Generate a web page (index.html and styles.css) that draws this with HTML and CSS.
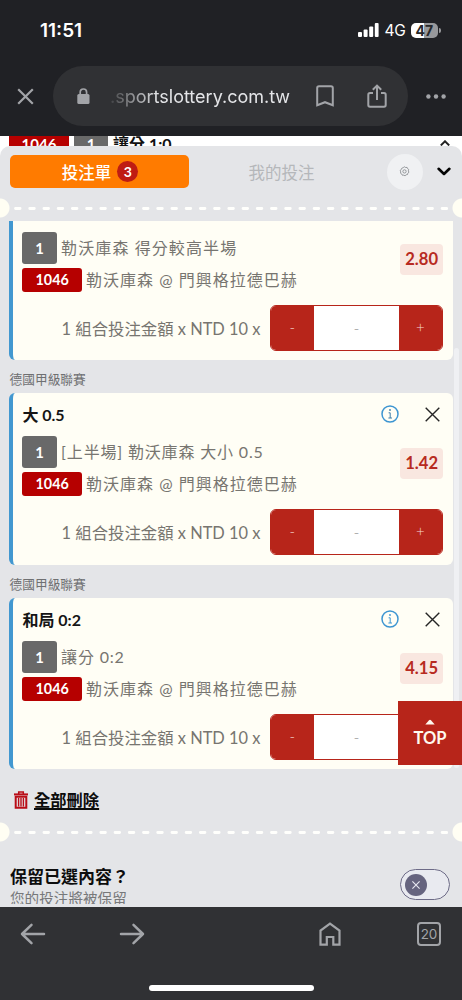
FILE: index.html
```html
<!DOCTYPE html>
<html lang="zh-Hant">
<head>
<meta charset="utf-8">
<meta name="viewport" content="width=device-width, initial-scale=1">
<title>投注單</title>
<link rel="stylesheet" href="styles.css">
</head>
<body>
<div class="phone">
  <header class="chrome">
    <div class="status">
      <span class="clock">11:51</span>
      <div class="status-right">
        <svg class="signal" width="21" height="14" viewBox="0 0 21 14" fill="#fff"><rect x="0" y="9" width="4" height="5" rx="1"/><rect x="5.6" y="6.5" width="4" height="7.5" rx="1"/><rect x="11.2" y="3.5" width="4" height="10.5" rx="1"/><rect x="16.8" y="0" width="3.8" height="14" rx="1"/></svg>
        <span class="network">4G</span>
        <span class="battery">47</span><span class="battery-tip"></span>
      </div>
    </div>
    <div class="address">
      <svg class="close-tab" width="17" height="17" viewBox="0 0 17 17" fill="none" stroke="#a2a4a8" stroke-width="2.2"><path d="M1.2 1.2 15.8 15.8M15.8 1.2 1.2 15.8"/></svg>
      <div class="omnibox">
        <svg class="lock" width="13" height="16" viewBox="0 0 13 16"><rect x="0.3" y="6" width="12.2" height="10" rx="1.5" fill="#a2a4a8"/><path d="M3.2 7V4.2a3.2 3.2 0 0 1 6.4 0V7" fill="none" stroke="#a2a4a8" stroke-width="1.7"/></svg>
        <span class="domain">.sportslottery.com.tw</span>
        <svg class="bookmark" width="18" height="22" viewBox="0 0 18 22" fill="none" stroke="#a2a4a8" stroke-width="2"><path d="M1.2 20.3V3Q1.2 1.2 3 1.2H15Q16.8 1.2 16.8 3V20.3L9 17.2Z"/></svg>
        <svg class="share" width="20" height="24" viewBox="0 0 20 24" fill="none" stroke="#a2a4a8" stroke-width="2"><path d="M6 9H3Q1.3 9 1.3 10.7V21Q1.3 22.7 3 22.7H17Q18.7 22.7 18.7 21V10.7Q18.7 9 17 9H14M10 16V2M5.8 5.8 10 1.6 14.2 5.8"/></svg>
      </div>
      <svg class="more" width="20" height="5" viewBox="0 0 20 5" fill="#a2a4a8"><circle cx="2.4" cy="2.5" r="2.2"/><circle cx="10" cy="2.5" r="2.2"/><circle cx="17.6" cy="2.5" r="2.2"/></svg>
    </div>
  </header>

  <main class="page">
    <div class="under">
      <span class="under-id">1046</span><span class="under-no">1</span><b class="under-title">讓分 1:0</b>
      <svg class="under-arrow" width="10" height="6" viewBox="0 0 10 6" fill="none" stroke="#222" stroke-width="2"><path d="M.8 5.4 5 1.3 9.2 5.4"/></svg>
    </div>
    <div class="sheet">
      <nav class="tabs">
        <div class="tab active">投注單<span class="count">3</span></div>
        <div class="tab">我的投注</div>
        <div class="settings"><svg width="11" height="11" viewBox="0 0 12 12" fill="none" stroke="#777b80" stroke-width=".8"><path d="M4.7 1.7 6 .9 7.3 1.7 8.8 1.5 9.4 2.9 10.6 3.8 10.2 5.3 10.8 6.7 9.7 7.8 9.3 9.3 7.8 9.6 6.6 10.7 5.2 10 3.7 10.1 3 8.7 1.7 7.9 1.9 6.4 1.2 5 2.4 4 2.9 2.6Z"/><circle cx="6" cy="5.9" r="1.8"/></svg></div>
        <svg class="collapse" width="14" height="9" viewBox="0 0 14 9" fill="none" stroke="#050505" stroke-width="2.6" stroke-linecap="round" stroke-linejoin="round"><path d="M1.6 1.8 7 7 12.4 1.8"/></svg>
      </nav>
      <div class="tear"><svg width="434" height="3" viewBox="0 0 434 3"><path d="M1.5 1.5H433" stroke="#fffffc" stroke-width="2.8" stroke-linecap="round" stroke-dasharray="4.6 9.62"/></svg></div>

      <section class="slip scrolled">
        <div class="pick">
          <div class="line"><span class="no">1</span><span class="desc">勒沃庫森 得分較高半場</span></div>
          <div class="line match"><span class="id">1046</span><span class="desc">勒沃庫森 @ 門興格拉德巴赫</span></div>
          <span class="odds">2.80</span>
        </div>
        <div class="stake"><span class="formula">1 組合投注金額 x NTD 10 x</span><div class="stepper"><span class="step">-</span><span class="amount">-</span><span class="step">+</span></div></div>
      </section>
      <div class="league">德國甲級聯賽</div>
      <section class="slip">
        <div class="slip-head"><b>大 0.5</b>
          <svg class="info" width="18" height="18" viewBox="0 0 18 18"><circle cx="9" cy="9" r="8" fill="none" stroke="#3d95d1" stroke-width="1.5"/><path d="M7.6 7.8H9.2V13M7.4 13H11" fill="none" stroke="#3d7da8" stroke-width="1"/><circle cx="9" cy="5" r=".9" fill="#3d7da8"/></svg>
          <svg class="remove" width="15" height="15" viewBox="0 0 15 15" stroke="#252525" stroke-width="1.4"><path d="M.7 .7 14.3 14.3M14.3 .7 .7 14.3"/></svg>
        </div>
        <div class="pick">
          <div class="line mixed"><span class="no">1</span><span class="desc">[上半場] 勒沃庫森 大小 0.5</span></div>
          <div class="line match"><span class="id">1046</span><span class="desc">勒沃庫森 @ 門興格拉德巴赫</span></div>
          <span class="odds">1.42</span>
        </div>
        <div class="stake"><span class="formula">1 組合投注金額 x NTD 10 x</span><div class="stepper"><span class="step">-</span><span class="amount">-</span><span class="step">+</span></div></div>
      </section>
      <div class="league">德國甲級聯賽</div>
      <section class="slip last">
        <div class="slip-head"><b>和局 0:2</b>
          <svg class="info" width="18" height="18" viewBox="0 0 18 18"><circle cx="9" cy="9" r="8" fill="none" stroke="#3d95d1" stroke-width="1.5"/><path d="M7.6 7.8H9.2V13M7.4 13H11" fill="none" stroke="#3d95d1" stroke-width="1"/><circle cx="9" cy="5" r=".9" fill="#3d95d1"/></svg>
          <svg class="remove" width="15" height="15" viewBox="0 0 15 15" stroke="#252525" stroke-width="1.4"><path d="M.7 .7 14.3 14.3M14.3 .7 .7 14.3"/></svg>
        </div>
        <div class="pick">
          <div class="line mixed"><span class="no">1</span><span class="desc">讓分 0:2</span></div>
          <div class="line match"><span class="id">1046</span><span class="desc">勒沃庫森 @ 門興格拉德巴赫</span></div>
          <span class="odds">4.15</span>
        </div>
        <div class="stake"><span class="formula">1 組合投注金額 x NTD 10 x</span><div class="stepper"><span class="step">-</span><span class="amount">-</span><span class="step"></span></div></div>
      </section>

      <div class="clear-all">
        <svg width="14" height="18" viewBox="0 0 14 18" fill="none" stroke="#b90d17"><path d="M0 3.4H14" stroke-width="2"/><path d="M4.7 3V.9H9.3V3" stroke-width="1.5"/><path d="M1.7 5.8H12.3V16.8H1.7Z" stroke-width="2"/><path d="M4.6 7V15.5M7 7V15.5M9.4 7V15.5" stroke-width="1.4"/></svg>
        <span>全部刪除</span>
      </div>
      <div class="tear"><svg width="434" height="3" viewBox="0 0 434 3"><path d="M1.5 1.5H433" stroke="#fffffc" stroke-width="2.8" stroke-linecap="round" stroke-dasharray="4.6 9.62"/></svg></div>
      <div class="keep">
        <div class="keep-text"><b>保留已選內容？</b><span>您的投注將被保留</span></div>
        <div class="toggle"><div class="knob"><svg width="8" height="8" viewBox="0 0 8 8" stroke="#e8e8f2" stroke-width="1.1"><path d="M.4 .4 7.6 7.6M7.6 .4 .4 7.6"/></svg></div></div>
      </div>
      <div class="scrollbar"></div>
      <div class="to-top"><svg width="10" height="6" viewBox="0 0 10 6" fill="#fff9ef"><path d="M.3 5.6 4 1.2Q5 .2 6 1.2L9.7 5.6Z"/></svg><span>TOP</span></div>
    </div>
  </main>

  <footer class="toolbar">
    <div class="buttons">
      <svg width="26" height="22" viewBox="0 0 26 22" fill="none" stroke="#a2a4a8" stroke-width="2.5" stroke-linecap="round" stroke-linejoin="round"><path d="M24 11H2M11.5 1.8 2 11 11.5 20.2"/></svg>
      <svg class="forward" width="26" height="22" viewBox="0 0 26 22" fill="none" stroke="#a2a4a8" stroke-width="2.5" stroke-linecap="round" stroke-linejoin="round"><path d="M2 11H24M14.5 1.8 24 11 14.5 20.2"/></svg>
      <svg class="home" width="22" height="24" viewBox="0 0 22 24" fill="none" stroke="#a2a4a8" stroke-width="2.2"><path d="M1.5 22.7V8.5L11 1.5 20.5 8.5V22.7H14.3V15H7.8V22.7Z"/></svg>
      <span class="tab-count">20</span>
    </div>
    <div class="home-bar"></div>
  </footer>
</div>
</body>
</html>
```
FILE: styles.css
```css
* { box-sizing: border-box; }
body { margin: 0; }
svg { display: block; flex: none; }

.phone {
  width: 462px;
  height: 1000px;
  display: flex;
  flex-direction: column;
  overflow: hidden;
  font-family: Lato, "Noto Sans CJK TC", sans-serif;
  white-space: nowrap;
}

/* Browser top bar */
.chrome { height: 136px; flex: none; background: #202125; font-family: Inter, sans-serif; }
.status {
  height: 60px;
  padding: 0 21px 0 40px;
  display: flex;
  justify-content: space-between;
  align-items: center;
}
.clock { color: #fff; font-size: 19px; font-weight: 600; letter-spacing: 0; }
.status-right { display: flex; align-items: center; color: #fff; }
.network { font-size: 15.5px; margin-left: 6px; width: 20px; letter-spacing: -0.3px; }
.battery {
  margin-left: 6px;
  width: 27.5px;
  height: 15px;
  border-radius: 5px;
  background: linear-gradient(90deg, #fff 47%, #97989b 47%);
  color: #26272a;
  font-size: 14px;
  font-weight: 700;
  line-height: 15px;
  text-align: center;
}
.battery-tip { width: 2px; height: 5px; margin-left: 1px; border-radius: 0 2px 2px 0; background: #97989b; }
.address { display: flex; align-items: center; padding: 6px 16px 0 17px; }
.omnibox {
  width: 355px;
  height: 60px;
  margin: 0 18px 0 19px;
  padding: 0 22px 0 24px;
  display: flex;
  align-items: center;
  border-radius: 30px;
  background: #303134;
}
.domain {
  width: 180px;
  margin-left: 20px;
  font-size: 18px;
  color: #e4e5e8;
  -webkit-mask-image: linear-gradient(90deg, rgba(0,0,0,.1), #000 48px);
  mask-image: linear-gradient(90deg, rgba(0,0,0,.1), #000 48px);
}
.bookmark { margin-left: 25.5px; }
.share { margin-left: 33px; }

/* Page */
.page { flex: 1; min-height: 0; background: #fff; overflow: hidden; }
.under { height: 10px; padding: 0 12px 0 9px; display: flex; align-items: flex-start; overflow: hidden; }
.under-id, .under-no {
  height: 20px;
  line-height: 17px;
  color: #fff;
  font-size: 15px;
  font-weight: 700;
  text-align: center;
}
.under-id { width: 60px; background: #b60000; }
.under-no { width: 34px; margin-left: 5px; background: #696969; }
.under-title { font-size: 16px; line-height: 16px; margin-left: 5px; color: #111; }
.under-arrow { margin: 4px 0 0 auto; }

.sheet {
  position: relative;
  height: 761px;
  overflow: hidden;
  border-radius: 10px 10px 0 0;
  background: #e4e5e8;
}
.tabs { display: flex; align-items: center; height: 51px; margin-bottom: 1px; padding: 0 11px 0 9.5px; }
.tab { width: 179px; height: 33px; display: flex; align-items: center; justify-content: center; font-size: 16.5px; color: #b5b7ba; }
.tab.active { padding-left: 2px; border-radius: 5px; background: #ff7b00; color: #fff; font-weight: 500; }
.tab:not(.active) { width: 186px; }
.count {
  width: 21px;
  height: 21px;
  margin-left: 6px;
  border-radius: 50%;
  background: #bf1c13;
  font-size: 14px;
  font-weight: 700;
  line-height: 21px;
  text-align: center;
}
.settings { width: 36px; height: 36px; margin-left: 12px; border-radius: 50%; background: #f0f1f3; display: grid; place-items: center; }
.collapse { margin-left: 14px; }

.tear {
  height: 20px;
  display: flex;
  align-items: center;
  justify-content: center;
  background:
    radial-gradient(circle at 0 50%, #fffef3 9px, transparent 10px),
    radial-gradient(circle at 100% 50%, #fffef3 9px, transparent 10px);
}

.slip {
  width: 443.5px;
  height: 172px;
  margin-left: 9.4px;
  padding: 0 10px 0 9px;
  border-left: 4px solid #4298d0;
  border-radius: 6px;
  background: #fffef5;
}
.slip.scrolled { height: 139px; margin-top: 3px; padding-top: 10.5px; border-radius: 0 0 6px 6px; }
.slip.last { height: 171px; }
.slip-head { height: 42.5px; display: flex; align-items: center; color: #151515; font-size: 16px; }
.info { margin-left: auto; }
.remove { margin: 0 3px 0 26px; }
.pick { display: grid; grid-template-columns: 1fr auto; grid-template-rows: 32px 24px; row-gap: 4px; }
.line { grid-column: 1; display: flex; align-items: center; }
.no, .id { display: block; border-radius: 3px; color: #fff; font-weight: 700; font-size: 14.8px; text-align: center; }
.no { width: 34.5px; height: 32px; line-height: 32px; background: #696969; }
.id { width: 59.5px; height: 24px; line-height: 24px; background: #b60000; font-size: 14.3px; }
.desc { margin-left: 4.2px; color: #777570; font-size: 16px; letter-spacing: 1.1px; line-height: 24px; }
.match .desc { letter-spacing: 1px; }
.mixed .desc { letter-spacing: 0.83px; }
.odds {
  grid-column: 2;
  grid-row: 1 / 3;
  align-self: center;
  width: 42.5px;
  height: 31px;
  margin-bottom: 5px;
  border-radius: 4px;
  background: #f9e7e0;
  color: #b72a21;
  font-size: 16.6px;
  font-weight: 700;
  line-height: 31px;
  text-align: center;
}
.stake { margin-top: 13.5px; display: flex; align-items: center; justify-content: flex-end; }
.formula { color: #777570; font-size: 16.4px; margin-right: 9.5px; }
.stepper {
  width: 173px;
  height: 45.5px;
  display: grid;
  grid-template-columns: 43px 1fr 43px;
  border: 1px solid #b7251a;
  border-radius: 6px;
  background: #fff;
  line-height: 43px;
  text-align: center;
  overflow: hidden;
}
.step { background: #b7251a; color: #f6d8d2; font-size: 15px; font-weight: 300; }
.amount { color: #8f8f8f; font-size: 16px; font-weight: 300; }
.league { height: 33px; padding-left: 9.6px; color: #6f7072; font-size: 12.7px; line-height: 38px; }

.clear-all { height: 53px; padding: 9px 0 0 14px; display: flex; align-items: center; gap: 6px; color: #0c0c0c; font-size: 16.3px; font-weight: 700; }
.clear-all span { line-height: 20px; text-decoration: underline; text-decoration-thickness: 1.5px; text-underline-offset: 2px; }
.keep { height: 62px; margin-top: 0; padding: 24px 12px 0 10px; display: flex; justify-content: space-between; }
.keep-text { height: 38px; display: flex; flex-direction: column; overflow: hidden; }
.keep-text b { color: #0d0d0d; font-size: 17px; line-height: 22px; }
.keep-text span { color: #77787a; font-size: 14.6px; line-height: 21px; }
.toggle { width: 50px; height: 31px; margin-top: 3px; padding: 4px; border: 1px solid #6d6b87; border-radius: 16px; background: #e9eaf0; }
.knob { width: 22px; height: 22px; border-radius: 50%; background: #66647f; display: grid; place-items: center; }

.scrollbar { position: absolute; right: 3px; top: 202px; width: 5px; height: 420px; border-radius: 3px; background: #eff0f3; }
.to-top {
  position: absolute;
  right: 0;
  top: 555.4px;
  width: 64px;
  height: 64px;
  padding-top: 18px;
  display: flex;
  flex-direction: column;
  align-items: center;
  background: #b7251a;
  color: #fff9ef;
  font-size: 16.5px;
  font-weight: 700;
}
.to-top span { margin-top: 3px; line-height: 21px; }

/* Browser bottom bar */
.toolbar { height: 93px; flex: none; background: #303134; display: flex; flex-direction: column; align-items: center; }
.buttons { width: 462px; height: 54px; padding: 0 21px 0 20px; display: flex; align-items: center; }
.forward { margin-left: 73px; }
.home { margin-left: 174px; }
.tab-count {
  width: 24px;
  height: 24px;
  margin-left: auto;
  border: 2px solid #a2a4a8;
  border-radius: 4px;
  color: #a2a4a8;
  font: 13.5px/20px Inter, sans-serif;
  text-align: center;
}
.home-bar { width: 165px; height: 6px; margin-top: 23.5px; border-radius: 3px; background: #fff; }
```
